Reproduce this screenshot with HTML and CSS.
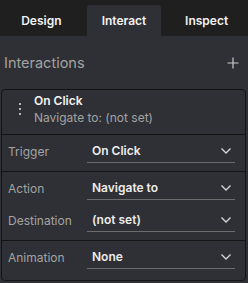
FILE: index.html
```html
<!DOCTYPE html>
<html lang="en">
<head>
  <meta charset="UTF-8">
  <title>Interactions</title>
  <link rel="stylesheet" href="styles.css">
</head>
<body>
  <div class="tabs">
    <div class="tab">Design</div>
    <div class="tab active">Interact</div>
    <div class="tab">Inspect</div>
  </div>

  <div class="section-head">
    <span class="section-title">Interactions</span>
    <svg class="add" width="12" height="12" viewBox="0 0 12 12">
      <path d="M6 0.5V11.5M0.5 6H11.5" stroke="#c9c9c9" stroke-width="1.2" fill="none"/>
    </svg>
  </div>

  <div class="card">
    <div class="card-head">
      <svg class="handle" width="2" height="12" viewBox="0 0 2 12">
        <rect x="0" y="0" width="2" height="2" fill="#b5b5b5"/>
        <rect x="0" y="5" width="2" height="2" fill="#b5b5b5"/>
        <rect x="0" y="10" width="2" height="2" fill="#b5b5b5"/>
      </svg>
      <div class="card-titles">
        <div class="card-title">On Click</div>
        <div class="card-sub">Navigate to: (not set)</div>
      </div>
    </div>

    <div class="group">
      <div class="field">
        <span class="label">Trigger</span>
        <div class="select"><span>On Click</span><svg class="chev" width="10" height="6" viewBox="0 0 10 6"><path d="M0.5 0.5L5 5L9.5 0.5" stroke="#d8d8d8" stroke-width="1.3" fill="none"/></svg></div>
      </div>
    </div>

    <div class="group">
      <div class="field">
        <span class="label">Action</span>
        <div class="select"><span>Navigate to</span><svg class="chev" width="10" height="6" viewBox="0 0 10 6"><path d="M0.5 0.5L5 5L9.5 0.5" stroke="#d8d8d8" stroke-width="1.3" fill="none"/></svg></div>
      </div>
      <div class="field">
        <span class="label">Destination</span>
        <div class="select"><span>(not set)</span><svg class="chev" width="10" height="6" viewBox="0 0 10 6"><path d="M0.5 0.5L5 5L9.5 0.5" stroke="#d8d8d8" stroke-width="1.3" fill="none"/></svg></div>
      </div>
    </div>

    <div class="group last">
      <div class="field">
        <span class="label">Animation</span>
        <div class="select"><span>None</span><svg class="chev" width="10" height="6" viewBox="0 0 10 6"><path d="M0.5 0.5L5 5L9.5 0.5" stroke="#d8d8d8" stroke-width="1.3" fill="none"/></svg></div>
      </div>
    </div>
  </div>
</body>
</html>
```

FILE: styles.css
```css
* {
  margin: 0;
  padding: 0;
  box-sizing: border-box;
}

body {
  font-family: Inter, "Noto Sans", sans-serif;
  background-color: #2e3035;
  color: #e8e8e8;
  width: 248px;
  height: 283px;
  overflow: hidden;
}

.tabs {
  display: grid;
  grid-template-columns: repeat(3, 1fr);
  height: 36px;
  padding-top: 5px;
  background-color: #1f1f1f;
}

.tab {
  display: flex;
  align-items: center;
  justify-content: center;
  margin: 0 4px;
  font-size: 12px;
  font-weight: 600;
  color: #f2f2f2;
  border-radius: 3px 3px 0 0;
}

.tab.active {
  background-color: #2e3035;
}

.section-head {
  display: flex;
  align-items: center;
  justify-content: space-between;
  height: 53px;
  padding: 0 9px 0 4px;
}

.section-title {
  font-size: 14.5px;
  color: #a3a3a3;
}

.card {
  margin: 0 2px 0 1px;
  border: 1px solid #141414;
  border-radius: 4px;
  height: 192px;
}

.card-head {
  display: flex;
  align-items: flex-start;
  height: 45px;
  padding: 3px 0 0 17px;
  border-bottom: 1px solid #141414;
}

.handle {
  margin: 10px 13px 0 0;
}

.card-title {
  font-size: 12px;
  line-height: 15px;
  font-weight: 600;
  color: #f2f2f2;
}

.card-sub {
  font-size: 12px;
  line-height: 15px;
  color: #a3a3a3;
  margin-top: 2px;
}

.group {
  display: flex;
  flex-direction: column;
  gap: 8px;
  padding: 4px 10px 8px 6px;
  border-bottom: 1px solid #141414;
}

.group.last {
  border-bottom: none;
}

.field {
  display: flex;
  align-items: center;
  height: 24px;
}

.label {
  width: 79px;
  font-size: 12px;
  color: #a3a3a3;
}

.select {
  flex: 1;
  display: flex;
  align-items: center;
  justify-content: space-between;
  height: 24px;
  padding: 0 4px 0 5px;
  border-bottom: 1px solid #6b6b6b;
  font-size: 12px;
  font-weight: 600;
  color: #ececec;
}
```
